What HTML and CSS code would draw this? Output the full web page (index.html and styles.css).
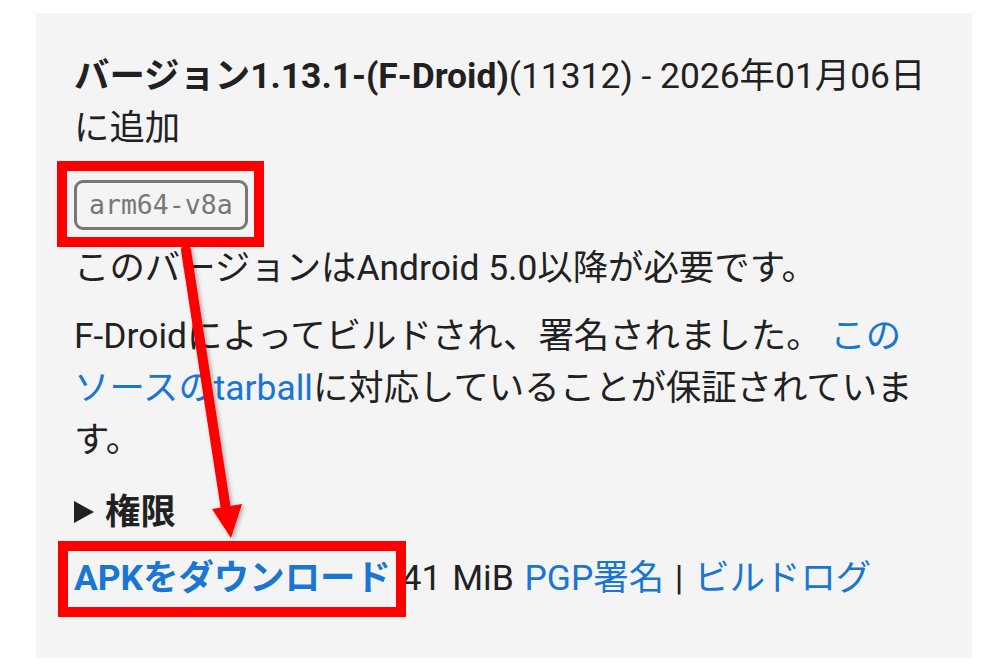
FILE: index.html
```html
<!DOCTYPE html>
<html lang="ja">
<head>
<meta charset="UTF-8">
<title>バージョン 1.13.1</title>
<link rel="stylesheet" href="styles.css">
</head>
<body>
<div class="package">
  <h3 class="version-title"><b>バージョン1.13.1-(F-Droid)</b>(11312) - 2026年01月06日に追加</h3>
  <div class="abis">
    <span class="marked"><code class="abi">arm64-v8a</code></span>
  </div>
  <p>このバージョンはAndroid 5.0以降が必要です。</p>
  <p>F-Droidによってビルドされ、署名されました。 <a href="#">このソースのtarball</a>に対応していることが保証されています。</p>
  <details class="perms">
    <summary><span class="arrow"></span>権限</summary>
  </details>
  <p class="downloads">
    <a class="apk marked" href="#">APKをダウンロード</a> 41 MiB <a href="#">PGP署名</a> | <a href="#">ビルドログ</a>
  </p>
</div>

<svg class="annotation" width="1008" height="672" viewBox="0 0 1008 672">
  <defs>
    <filter id="shadow" x="-50%" y="-10%" width="200%" height="120%">
      <feDropShadow dx="2" dy="2" stdDeviation="2" flood-color="#000" flood-opacity="0.3"/>
    </filter>
  </defs>
  <g filter="url(#shadow)">
    <line x1="186" y1="250" x2="226" y2="510" stroke="#ff0000" stroke-width="10" stroke-linecap="round"/>
    <polygon points="212,509 242,504 231,538" fill="#ff0000"/>
  </g>
</svg>
</body>
</html>
```
FILE: styles.css
```css
body {
  margin: 0;
  background: #fff;
  color: #212121;
  font-family: Roboto, "Noto Sans CJK JP", sans-serif;
  font-size: 35.4px;
  line-height: 52px;
}

a {
  color: #1976d2;
  text-decoration: none;
}

.package {
  margin: 13px 36px 14px;
  padding: 37px 44px 54px 38px;
  background: #f4f4f4;
}

.version-title {
  margin: 0;
  font-size: 35.4px;
  font-weight: normal;
}
.version-title b {
  font-weight: bold;
}

.abis {
  margin-top: 22px;
  height: 50px;
}
.abi {
  display: inline-block;
  box-sizing: border-box;
  height: 50px;
  padding: 0 12px;
  border: 3px solid #777;
  border-radius: 9px;
  color: #777;
  font-family: "DejaVu Sans Mono", monospace;
  font-size: 26.5px;
  line-height: 44px;
}

p {
  margin: 16px 0 0;
}

.perms {
  margin-top: 20px;
}
.perms summary {
  list-style: none;
  display: flex;
  align-items: center;
  font-weight: bold;
}
.perms summary::-webkit-details-marker {
  display: none;
}
.arrow {
  width: 0;
  height: 0;
  margin-right: 11px;
  border-top: 11px solid transparent;
  border-bottom: 11px solid transparent;
  border-left: 20px solid #212121;
}

.downloads {
  margin-top: 14px;
  word-spacing: 2px;
}
.apk {
  font-weight: bold;
}

/* 注釈の赤枠 */
.marked {
  position: relative;
  display: inline-block;
}
.abis .marked::after {
  content: "";
  position: absolute;
  top: -15px;
  bottom: -17px;
  left: -17px;
  right: -16px;
  border: 10px solid #ff0000;
}
.apk.marked::after {
  content: "";
  position: absolute;
  top: -11px;
  bottom: -13px;
  left: -16px;
  right: -15px;
  border: 10px solid #ff0000;
}

.annotation {
  position: absolute;
  left: 0;
  top: 0;
  pointer-events: none;
}
```
